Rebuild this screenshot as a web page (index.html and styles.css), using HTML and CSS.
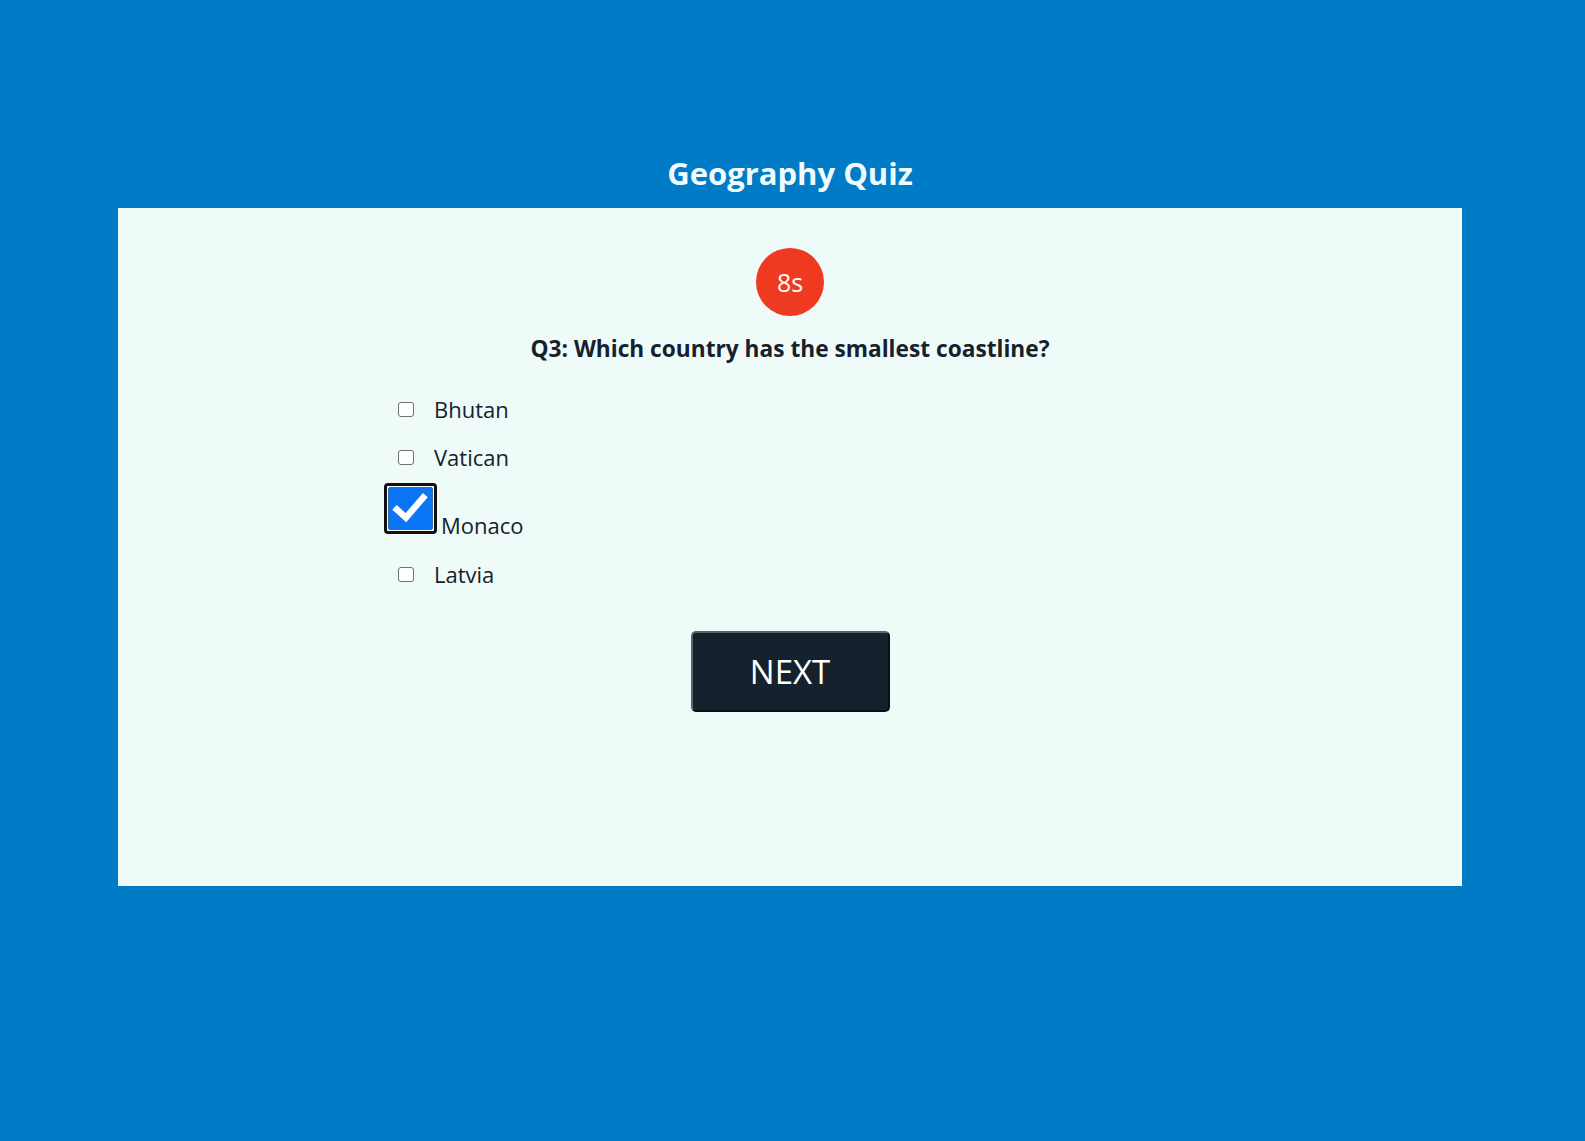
FILE: index.html
```html
<!DOCTYPE html>
<html lang="en">
<head>
<meta charset="utf-8">
<title>Geography Quiz</title>
<link rel="stylesheet" href="styles.css">
</head>
<body>
<div class="page">
  <h1 class="title">Geography Quiz</h1>
  <main class="card">
    <div class="timer">8s</div>
    <h2 class="question">Q3: Which country has the smallest coastline?</h2>
    <div class="options">
      <label class="option"><span class="box"></span><span class="label">Bhutan</span></label>
      <label class="option"><span class="box"></span><span class="label">Vatican</span></label>
      <label class="option option-checked"><span class="box-checked"><span class="box-fill"><svg class="check" viewBox="0 0 40 34" width="37" height="31"><path d="M5 18 L15 27 L34 5" fill="none" stroke="#fff" stroke-width="7" stroke-linecap="square" stroke-linejoin="miter"/></svg></span></span><span class="label label-checked">Monaco</span></label>
      <label class="option option-last"><span class="box"></span><span class="label">Latvia</span></label>
    </div>
    <button class="next" type="button">NEXT</button>
  </main>
</div>
</body>
</html>
```
FILE: styles.css
```css
* { box-sizing: border-box; }
html, body { margin: 0; padding: 0; }
body {
  background: #007cc7;
  font-family: "Open Sans", "Noto Sans", sans-serif;
  color: #15212b;
}
.page {
  width: 1580px;
  display: flex;
  flex-direction: column;
  align-items: center;
  padding-top: 153px;
}
.title {
  margin: 0 0 15px;
  font-size: 31px;
  line-height: 40px;
  font-weight: 700;
  color: #f0fbff;
}
.card {
  width: 1344px;
  height: 678px;
  background: #eefbf9;
  display: flex;
  flex-direction: column;
  align-items: center;
  padding-top: 40px;
}
.timer {
  width: 68px;
  height: 68px;
  border-radius: 50%;
  background: #ef3a22;
  color: #fff;
  font-size: 25px;
  line-height: 68px;
  text-align: center;
}
.question {
  margin: 18px 0 0;
  font-size: 22.7px;
  line-height: 30px;
  font-weight: 700;
}
.options {
  align-self: stretch;
  display: flex;
  flex-direction: column;
  padding-left: 266px;
  margin-top: 30px;
}
.option {
  display: flex;
  align-items: center;
  height: 30px;
  margin-bottom: 18px;
  font-size: 22px;
  line-height: 30px;
}
.option-checked {
  align-items: flex-end;
  height: auto;
  margin-top: -7px;
  margin-bottom: 25px;
}
.option-last { margin-bottom: 0; }
.label-checked { margin-bottom: -6px; }
.box {
  width: 16px;
  height: 15px;
  margin-left: 14px;
  margin-right: 20px;
  border: 1px solid #6f6f6f;
  border-radius: 3px;
  background: #fff;
}
.box-checked {
  display: block;
  width: 53px;
  height: 51px;
  border: 3px solid #111;
  border-radius: 4px;
  padding: 1px;
  background: #fff;
  margin-right: 4px;
}
.box-fill {
  display: flex;
  align-items: center;
  justify-content: center;
  width: 100%;
  height: 100%;
  background: #0a75f5;
  border: 1px solid #3a6ea8;
  border-radius: 2px;
}
.check { display: block; }
.next {
  margin-top: 42px;
  width: 199px;
  height: 81px;
  background: #15222d;
  color: #fff;
  font-family: "Open Sans", "Noto Sans", sans-serif;
  font-size: 33px;
  border-style: solid;
  border-width: 2px;
  border-color: #5d6368 #0b0f12 #0b0f12 #5d6368;
  border-radius: 5px;
  padding: 0;
}
```
